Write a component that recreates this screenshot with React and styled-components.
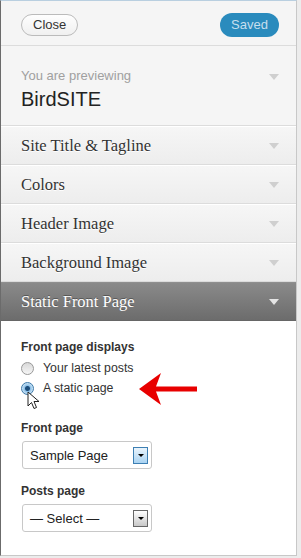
import React from "react";
import styled, { createGlobalStyle } from "styled-components";

const Global = createGlobalStyle`
  html, body { margin: 0; padding: 0; background: #ececec; }
  body { font-family: "Liberation Sans", Arial, sans-serif; }
`;

const Frame = styled.div`
  position: relative;
  width: 295px;
  height: 554px;
  border-left: 1px solid #6b6b6b;
  border-right: 1px solid #c8c8c8;
  border-top: 1px solid #b9cfe0;
  border-bottom: 1px solid #c8c8c8;
  background: #fff;
  display: flex;
  flex-direction: column;
  overflow: hidden;
`;

const Header = styled.div`
  height: 44px;
  background: #f5f5f5;
  border-bottom: 1px solid #dcdcdc;
  display: flex;
  align-items: center;
  justify-content: space-between;
  padding: 0 17px 0 20px;
`;

const CloseButton = styled.button`
  height: 22px;
  padding: 0 11px;
  border: 1px solid #bbb;
  border-radius: 11px;
  background: linear-gradient(#fefefe, #f0f0f0);
  font: 13px "Liberation Sans", Arial, sans-serif;
  color: #333;
  margin-top: 3px;
`;

const SavedButton = styled.button`
  height: 24px;
  width: 59px;
  border: none;
  border-radius: 12px;
  background: #2a8bbd;
  font: 13px "Liberation Sans", Arial, sans-serif;
  color: #c6dfee;
  margin-top: 3px;
`;

const Preview = styled.div`
  height: 80px;
  background: #f5f5f5;
  border-bottom: 1px solid #dcdcdc;
  padding: 0 17px 0 20px;
  display: flex;
  align-items: flex-start;
  justify-content: space-between;
  box-sizing: border-box;
`;

const PreviewText = styled.div`
  padding-top: 22px;
`;

const PreviewLabel = styled.div`
  font-size: 13px;
  color: #a0a0a0;
  line-height: 16px;
`;

const SiteName = styled.div`
  font-size: 20px;
  color: #222;
  line-height: 24px;
  margin-top: 3px;
`;

const Caret = styled.span`
  width: 0;
  height: 0;
  border-left: 5px solid transparent;
  border-right: 5px solid transparent;
  border-top: 6px solid ${(p) => (p.$light ? "#e4e4e4" : "#cfcfcf")};
  margin-top: ${(p) => p.$top || 0}px;
`;

const Section = styled.div`
  height: 39px;
  box-sizing: border-box;
  padding: 0 17px 0 20px;
  display: flex;
  align-items: center;
  justify-content: space-between;
  font-family: "Liberation Serif", "Times New Roman", serif;
  font-size: 16.5px;
  background: ${(p) =>
    p.$open
      ? "linear-gradient(#8a8a8a, #6c6c6c)"
      : "linear-gradient(#f6f6f6, #ededed)"};
  color: ${(p) => (p.$open ? "#fff" : "#333")};
  border-top: 1px solid ${(p) => (p.$open ? "#8f8f8f" : "#fff")};
  border-bottom: 1px solid ${(p) => (p.$open ? "#666" : "#dcdcdc")};
  text-shadow: ${(p) => (p.$open ? "0 -1px 0 #555" : "0 1px 0 #fff")};
`;

const Content = styled.div`
  position: relative;
  flex: 1;
  background: #fff;
  padding: 19px 20px 0 20px;
`;

const FieldTitle = styled.div`
  font-size: 12px;
  font-weight: bold;
  color: #333;
  line-height: 15px;
  margin-top: ${(p) => p.$gap || 0}px;
`;

const RadioRow = styled.label`
  display: flex;
  align-items: center;
  gap: 9px;
  font-size: 12.3px;
  color: #333;
  height: 20px;
  margin-top: ${(p) => p.$gap || 0}px;
`;

const RadioDot = styled.span`
  width: 11px;
  height: 11px;
  border-radius: 50%;
  border: 1px solid ${(p) => (p.$checked ? "#3b78a8" : "#999")};
  background: ${(p) =>
    p.$checked
      ? "radial-gradient(circle, #1b4c7a 0 2px, #8dc0e8 3px, #d8ebf8 6px)"
      : "linear-gradient(#d8d8d8, #f6f6f6)"};
`;

const SelectBox = styled.div`
  margin-top: 5px;
  margin-left: 1px;
  width: 130px;
  height: 28px;
  box-sizing: border-box;
  border: 1px solid #c8c8c8;
  border-radius: 3px;
  display: flex;
  align-items: center;
  justify-content: space-between;
  padding: 0 3px 0 7px;
  font-size: 13px;
  color: #222;
`;

const DropButton = styled.span`
  width: 15px;
  height: 17px;
  box-sizing: border-box;
  border: 1px solid ${(p) => (p.$active ? "#3d7fb3" : "#666")};
  background: ${(p) =>
    p.$active ? "linear-gradient(#eaf4fc, #a9d3f2)" : "linear-gradient(#fff, #c8c8c8)"};
  display: flex;
  align-items: center;
  justify-content: center;
  &::after {
    content: "";
    border-left: 3px solid transparent;
    border-right: 3px solid transparent;
    border-top: 3px solid #000;
  }
`;

const Overlay = styled.svg`
  position: absolute;
  left: ${(p) => p.$x}px;
  top: ${(p) => p.$y}px;
`;

export default function App() {
  const sections = ["Site Title & Tagline", "Colors", "Header Image", "Background Image"];
  return (
    <>
      <Global />
      <Frame>
        <Header>
          <CloseButton>Close</CloseButton>
          <SavedButton>Saved</SavedButton>
        </Header>
        <Preview>
          <PreviewText>
            <PreviewLabel>You are previewing</PreviewLabel>
            <SiteName>BirdSITE</SiteName>
          </PreviewText>
          <Caret $top={28} />
        </Preview>
        {sections.map((s) => (
          <Section key={s}>
            {s}
            <Caret />
          </Section>
        ))}
        <Section $open>
          Static Front Page
          <Caret $light />
        </Section>
        <Content>
          <FieldTitle>Front page displays</FieldTitle>
          <RadioRow $gap={3}>
            <RadioDot />
            Your latest posts
          </RadioRow>
          <RadioRow $gap={0}>
            <RadioDot $checked />
            A static page
          </RadioRow>
          <FieldTitle $gap={23}>Front page</FieldTitle>
          <SelectBox>
            Sample Page
            <DropButton $active />
          </SelectBox>
          <FieldTitle $gap={15}>Posts page</FieldTitle>
          <SelectBox>
            — Select —
            <DropButton />
          </SelectBox>
          <Overlay $x={26} $y={70} width="14" height="20" viewBox="0 0 14 20">
            <path d="M1 1 L1 15 L4.5 11.5 L7 17.5 L9.5 16.5 L7 10.5 L12 10.5 Z" fill="#fff" stroke="#222" strokeWidth="1" strokeLinejoin="round" />
          </Overlay>
          <Overlay $x={137} $y={51} width="60" height="34" viewBox="0 0 60 34">
            <path d="M1 17 Q12 9 23 1 L18 14.5 L59 14.5 L59 19.5 L18 19.5 L23 33 Q12 25 1 17 Z" fill="#e80000" />
          </Overlay>
        </Content>
      </Frame>
    </>
  );
}
